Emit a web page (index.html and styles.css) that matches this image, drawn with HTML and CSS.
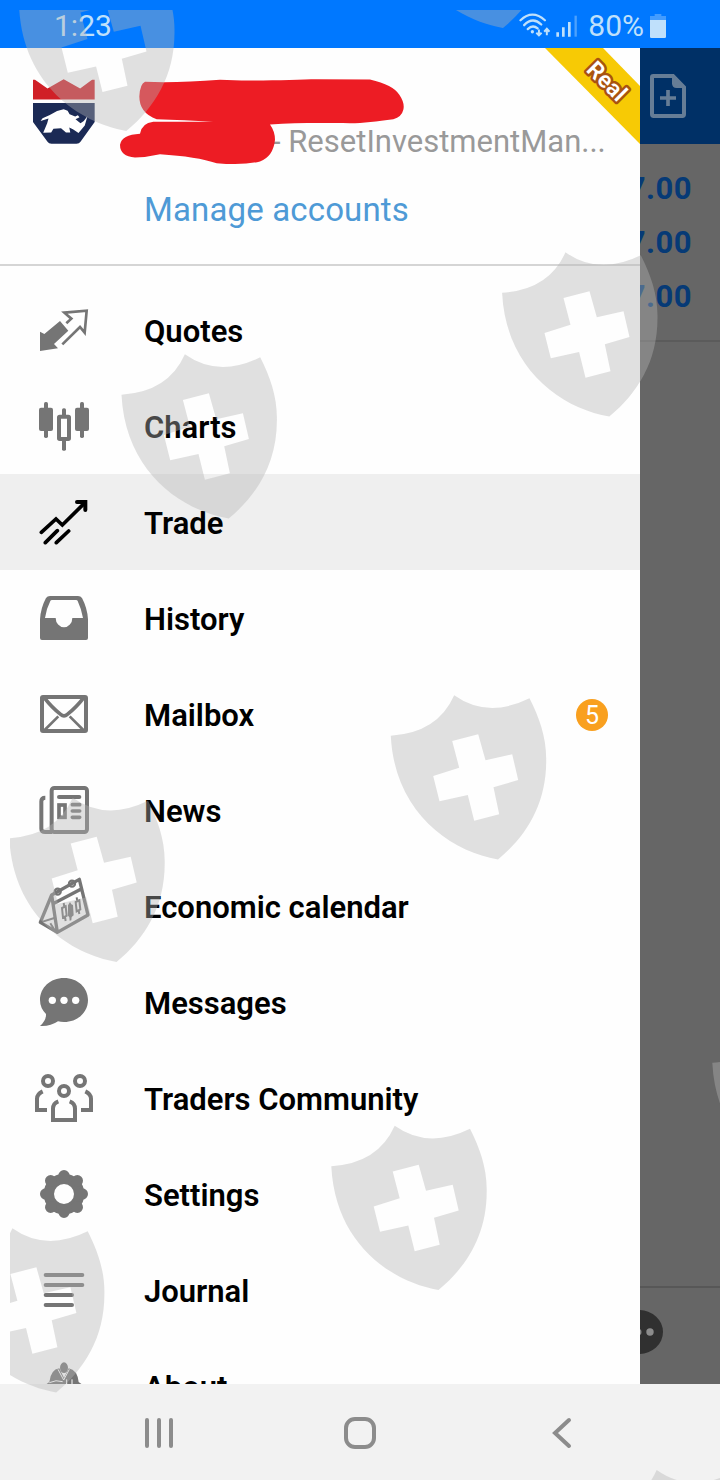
FILE: index.html
```
<!DOCTYPE html>
<html lang="en">
<head>
  <meta charset="UTF-8" />
  <meta name="viewport" content="width=device-width, initial-scale=1" />
  <title>Trade</title>
  <link rel="stylesheet" href="styles.css">
</head>
<body>
<div class="phone">

  <!-- Status bar -->
  <header class="status-bar">
    <span class="clock">1:23</span>
    <div class="status-right">
      <svg class="wifi" viewBox="0 0 96 76">
        <g fill="none" stroke="currentColor" stroke-width="7" stroke-linecap="round">
          <path d="M4 22Q40-12 78 22" /><path d="M15 37Q41 10 67 35" /><path d="M26 49Q41 34 56 47" />
        </g>
        <circle cx="40" cy="57" r="5" fill="currentColor" />
        <path d="M60 50v18m-8-8l8 8 8-8M84 68V48m-8 9l8-9 8 9" fill="none" stroke="currentColor" stroke-width="6" />
      </svg>
      <svg class="signal" viewBox="0 0 66 72">
        <path d="M5 55V68M22 40V68M40 24V68" stroke="currentColor" stroke-width="8" />
        <path d="M59 5V68" stroke="currentColor" stroke-width="7" opacity=".4" />
      </svg>
      <span class="percent">80%</span>
      <svg class="battery" viewBox="0 0 48 72">
        <path d="M14 0h20v6h14v12H0V6h14z" fill="currentColor" opacity=".35" />
        <path d="M0 18h48v50q0 4-4 4H4q-4 0-4-4z" fill="currentColor" />
      </svg>
    </div>
  </header>

  <main class="screen">
    <!-- Menu -->
    <nav class="drawer">
      <section class="account">
        <svg class="broker-logo" viewBox="0 0 188 195">
          <path fill="#d02027" d="M0 1h6l38 27L93 0l50 28L179 1h8v60H0z" />
          <path fill="#1b2a55" d="M0 72h187v57l-43 60q-4 6-12 6H56q-8 0-12-6L0 129z" />
          <path fill="#fff" d="M23 126l6-8 22-10 22-12 20-5 12 4 6 11 17 7 8-4 5 6-12 6 15 12 10-7 11-14-8 28-19 23-17-12-11-5 3 15h-13l-15-13-23 2-7 11-24 1 12-29 4-14z" />
        </svg>
        <p class="account-server">- ResetInvestmentMan...</p>
        <svg class="scribble" viewBox="30 55 855 260">
          <path fill="#ed1c24" d="M105 66Q200 70 330 60C430 66 560 58 620 58L780 59Q850 75 868 105Q885 130 880 150Q875 172 850 178C800 184 760 190 720 190C650 190 560 188 480 194Q495 215 495 240Q490 290 450 305Q400 317 320 310Q260 290 150 283Q110 292 75 293Q30 290 30 255Q35 225 90 222Q95 190 130 186L310 186Q220 180 140 178Q88 160 88 110Q90 72 105 66Z" />
        </svg>
        <a class="manage">Manage accounts</a>
        <svg class="ribbon" viewBox="0 0 96 96">
          <path fill="#f7ca05" d="M1 0H59L96 38V96z" />
          <text x="63" y="41" transform="rotate(45 63 33)">Real</text>
        </svg>
      </section>

      <ul class="menu">
        <li>
          <svg class="icon" viewBox="0 0 192 192">
            <path fill="currentColor" d="M24 101l13 7 47-39 25 29-43 40 12 13-54 8z" />
            <path class="line" stroke-width="8" d="M103 76l15-14-21-18 67-6-6 66-14-17-53 52" />
          </svg>
          <span>Quotes</span>
        </li>
        <li>
          <svg class="icon" viewBox="0 0 192 192">
            <g fill="currentColor">
              <rect x="21" y="41" width="42" height="70" rx="6" /><rect x="36" y="24" width="12" height="108" rx="5" />
              <rect x="129" y="41" width="42" height="70" rx="6" /><rect x="144" y="24" width="12" height="108" rx="5" />
              <rect x="90" y="43" width="12" height="24" rx="5" /><rect x="90" y="137" width="12" height="33" rx="4" />
            </g>
            <rect class="line" stroke-width="12" x="81" y="68" width="30" height="67" rx="2" />
          </svg>
          <span>Charts</span>
        </li>
        <li class="active">
          <svg class="icon" viewBox="0 0 192 192">
            <path class="line round" stroke-width="11" d="M28 127L72 87l19 18 68-67M40 158l36-36M73 158l37-35" />
            <path class="line round" stroke-width="12" d="M135 36h25v24" />
          </svg>
          <span>Trade</span>
        </li>
        <li>
          <svg class="icon" viewBox="0 0 192 192">
            <path fill="currentColor" fill-rule="evenodd" d="M24 156V100Q26 66 42 36 46 30 54 30H138Q146 30 150 36 166 66 168 100V156Q168 162 162 162H30Q24 162 24 156ZM39 96H71A25 28 0 0 0 121 96H153Q148 68 137 45 136 42 132 42H60Q56 42 55 45 43 68 39 96Z" />
          </svg>
          <span>History</span>
        </li>
        <li>
          <svg class="icon" viewBox="0 0 192 192">
            <rect class="line" stroke-width="12" x="30" y="45" width="132" height="102" rx="3" />
            <path class="line" stroke-width="11" d="M36 46Q60 77 86 97 96 106 106 97 132 77 156 46" />
            <path class="line" stroke-width="8" d="M38 144l41-41M154 144l-41-41" />
          </svg>
          <span>Mailbox</span>
          <b class="badge">5</b>
        </li>
        <li>
          <svg class="icon" viewBox="0 0 192 192">
            <rect class="line" stroke-width="12" x="59" y="30" width="106" height="132" rx="8" />
            <path class="line" stroke-width="12" d="M40 59Q28 59 28 70V152Q28 162 40 162H60" />
            <path class="line round" stroke-width="12" d="M81 57h61" />
            <rect class="line" stroke-width="11" x="81" y="81" width="18" height="37" />
            <path class="line round" stroke-width="11" d="M121 80h22M121 99h22M121 118h22" />
          </svg>
          <span>News</span>
        </li>
        <li>
          <svg class="icon" viewBox="0 0 192 192">
            <path class="line" stroke-width="10" stroke-linejoin="round" d="M59 63L142 16l26 107-92 52zM59 63L25 145l51 30M66 88l83-44" />
            <path class="line" stroke-width="6" d="M25 145l42-13M72 175l-17-27" />
            <g class="line" stroke-width="7"><circle cx="77" cy="53" r="9" /><circle cx="120" cy="29" r="9" /></g>
            <path class="line" stroke-width="6" d="M90 102l11-5 3 28-11 6zM131 84l11-5 3 27-11 6zM95 87l2 12M99 129l2 12M134 70l2 12M140 109l2 11" />
            <path fill="currentColor" d="M108 94l6-10 4 7 5 2 2 31-6 5-1 10-5 1-1-10-4-5z" />
          </svg>
          <span>Economic calendar</span>
        </li>
        <li>
          <svg class="icon" viewBox="0 0 192 192">
            <path fill="currentColor" d="M96 24C137 24 168 53 168 90S137 156 96 156Q86 156 78 154 55 170 24 168 43 151 42 132 24 114 24 90C24 53 55 24 96 24Z" />
            <g fill="#fff"><circle cx="61" cy="91" r="11" /><circle cx="96" cy="91" r="11" /><circle cx="131" cy="91" r="11" /></g>
          </svg>
          <span>Messages</span>
        </li>
        <li>
          <svg class="icon" viewBox="0 0 192 192">
            <g class="line" stroke-width="12">
              <circle cx="48" cy="45" r="15" /><circle cx="144" cy="45" r="15" /><circle cx="96" cy="75" r="15" />
              <path d="M32 76Q15 84 15 98V132H45M160 76Q177 84 177 98V132H147M79 106Q63 112 63 128V162H129V128Q129 112 113 106" />
            </g>
          </svg>
          <span>Traders Community</span>
        </li>
        <li>
          <svg class="icon" viewBox="0 0 192 192">
            <circle class="line" cx="96" cy="96" r="45.500" stroke-width="31" />
            <path class="line round" stroke-width="34" d="M96 44V41M96 148v3M44 96h-3M148 96h3M57 57l-1-1M135 135l1 1M57 135l-1 1M135 57l1-1" />
          </svg>
          <span>Settings</span>
        </li>
        <li>
          <svg class="icon" viewBox="0 0 192 192">
            <path class="line round" stroke-width="12" d="M41 51H151M41 81H151M41 111H120M41 141H120" />
          </svg>
          <span>Journal</span>
        </li>
        <li>
          <svg class="icon" viewBox="0 0 192 192">
            <ellipse cx="96" cy="41" rx="12" ry="16" fill="currentColor" />
            <path fill="currentColor" d="M52 84Q56 47 82 43L96 72 110 43Q136 48 140 84L151 92V130H41V92Z" />
            <path fill="none" stroke="#fff" stroke-width="3" d="M78 46l17 32 17-32M52 86q20-10 40-3M104 76v14M120 76v14" />
          </svg>
          <span>About</span>
        </li>
      </ul>
    </nav>

    <!-- Trade page behind the menu -->
    <section class="behind">
      <div class="toolbar">
        <svg class="new-order" viewBox="0 0 108 132">
          <path d="M10 6H69L102 40V121Q102 126 97 126H11Q6 126 6 121V10Q6 6 10 6Z" fill="none" stroke="currentColor" stroke-width="12" />
          <path d="M66 3L105 42H80Q66 42 66 28Z" fill="currentColor" />
          <path d="M54 48V96M30 72H78" stroke="currentColor" stroke-width="11" />
        </svg>
      </div>
      <div class="totals">
        <span>7.00</span>
        <span>7.00</span>
        <span>7.00</span>
      </div>
      <div class="tabs">
        <svg class="chat" viewBox="0 0 48 48">
          <ellipse cx="24" cy="24" rx="24" ry="22" fill="#303030" />
          <g fill="#8c8c8c"><circle cx="12" cy="24" r="3.500" /><circle cx="23" cy="24" r="3.500" /><circle cx="35" cy="24" r="3.700" /></g>
        </svg>
      </div>
    </section>
  </main>

  <!-- System buttons -->
  <footer class="nav-bar">
    <svg viewBox="0 0 32 32"><path d="M4 3V29M16 3V29M28 3V29" /></svg>
    <svg viewBox="0 0 32 32"><rect x="2" y="2" width="28" height="28" rx="9" /></svg>
    <svg viewBox="0 0 32 32"><path d="M24 3L10 16L24 29" /></svg>
  </footer>

  <!-- Watermark -->
  <svg class="watermark" viewBox="10 10 710 1470">
    <defs>
      <path id="shield" fill-rule="evenodd" d="M1.300 41.700Q48 39 64.700 1.300 98 25 140 4.300C150 24 157 44 156.700 66C157 110 137 142 108.500 165.500C60 157 5 118 1.300 41.700ZM62.700 47L69.700 73.700 43.700 82 50 107.300 78.300 101 84.700 126.700 109.700 120.300 104 93.300 128.700 86 122.700 60.300 96 66.300 88.700 40.300Z" />
    </defs>
    <use href="#shield" x="17.800" y="-34.600" />
    <use href="#shield" x="394.500" y="-137.500" />
    <use href="#shield" x="500.800" y="251" />
    <use href="#shield" x="120.200" y="353" />
    <use href="#shield" x="389.500" y="694" />
    <use href="#shield" x="8" y="796.500" />
    <use href="#shield" x="711" y="1021" />
    <use href="#shield" x="330" y="1124.500" />
    <use href="#shield" x="-52.300" y="1227" />
    <use href="#shield" x="592" y="1468.700" />
  </svg>
</div>
</body>
</html>
```
FILE: styles.css
```
* { box-sizing: border-box; }
body {
  margin: 0;
  font-family: Roboto, "Liberation Sans", sans-serif;
  background: #fefefe;
}
.phone {
  position: relative;
  width: 720px;
  height: 1480px;
  display: flex;
  flex-direction: column;
  overflow: hidden;
}
.status-bar {
  height: 48px;
  padding: 3px 54px 0 54px;
  display: flex;
  align-items: center;
  justify-content: space-between;
  background: #0078ff;
  color: #bfe0fb;
  font-size: 30px;
}
.status-right {
  display: flex;
  align-items: center;
}
.wifi { width: 32px; height: 25px; }
.signal { width: 22px; height: 24px; margin: 0 10px 0 5px; }
.battery { width: 16px; height: 24px; margin-left: 6px; }

.screen {
  height: 1336px;
  display: flex;
  overflow: hidden;
}
.drawer { width: 640px; }
.account {
  position: relative;
  height: 218px;
  padding: 74px 32px 0 144px;
  border-bottom: 2px solid #d5d5d5;
}
.broker-logo {
  position: absolute;
  left: 33px;
  top: 31px;
  width: 62px;
  height: 65px;
}
.account-server {
  margin: 0 0 0 128px;
  font-size: 31px;
  line-height: 40px;
  color: #999;
  white-space: nowrap;
}
.scribble {
  position: absolute;
  left: 120px;
  top: 30px;
  width: 285px;
  height: 87px;
}
.manage {
  display: block;
  margin-top: 28px;
  font-size: 33px;
  line-height: 40px;
  letter-spacing: .15px;
  color: #4e9ad6;
}
.ribbon {
  position: absolute;
  right: 0;
  top: 0;
  width: 96px;
  height: 96px;
}
.ribbon text {
  font-size: 23px;
  font-weight: 600;
  text-anchor: middle;
  fill: #fff;
  stroke: #a9530f;
  stroke-width: 5px;
  stroke-linejoin: round;
  paint-order: stroke;
}

.menu {
  margin: 0;
  padding: 16px 0 0;
  list-style: none;
}
.menu li {
  height: 96px;
  padding: 0 32px;
  display: flex;
  align-items: center;
  gap: 48px;
  font-size: 31px;
  font-weight: 600;
  color: #000;
}
.menu span { padding-top: 2px; }
.icon {
  width: 64px;
  height: 64px;
  color: #757575;
}
.line { fill: none; stroke: currentColor; }
.round { stroke-linecap: round; }
.active { background: #efefef; }
.active .icon { color: #000; }
.badge {
  width: 32px;
  height: 32px;
  margin: 2px 0 0 auto;
  border-radius: 50%;
  background: #f9a01f;
  color: #fff;
  font-size: 25px;
  font-weight: 400;
  line-height: 33px;
  text-align: center;
}

.behind {
  width: 80px;
  display: flex;
  flex-direction: column;
  background: #666;
}
.toolbar {
  height: 96px;
  padding: 26px 10px;
  background: #003066;
  color: #667d96;
}
.new-order { width: 36px; height: 44px; }
.totals {
  height: 198px;
  padding: 18px 28px 0 0;
  display: flex;
  flex-direction: column;
  align-items: flex-end;
  border-bottom: 2px solid #5b5b5b;
  font-size: 31px;
  font-weight: 700;
  line-height: 54px;
  letter-spacing: .5px;
  color: #063a76;
  overflow: hidden;
}
.tabs {
  height: 98px;
  margin-top: auto;
  padding-top: 20px;
  border-top: 2px solid #575757;
  overflow: hidden;
}
.chat { width: 48px; height: 48px; margin-left: -25px; }

.nav-bar {
  height: 96px;
  padding: 0 143px;
  display: flex;
  align-items: center;
  justify-content: space-between;
  background: #f2f2f2;
}
.nav-bar svg {
  width: 32px;
  height: 32px;
  margin-top: 2px;
  fill: none;
  stroke: #8c8c8c;
  stroke-width: 4;
  stroke-linecap: round;
}
.watermark {
  position: absolute;
  left: 10px;
  top: 10px;
  width: 710px;
  height: 1470px;
  fill: rgba(179, 179, 179, .4);
}
```
